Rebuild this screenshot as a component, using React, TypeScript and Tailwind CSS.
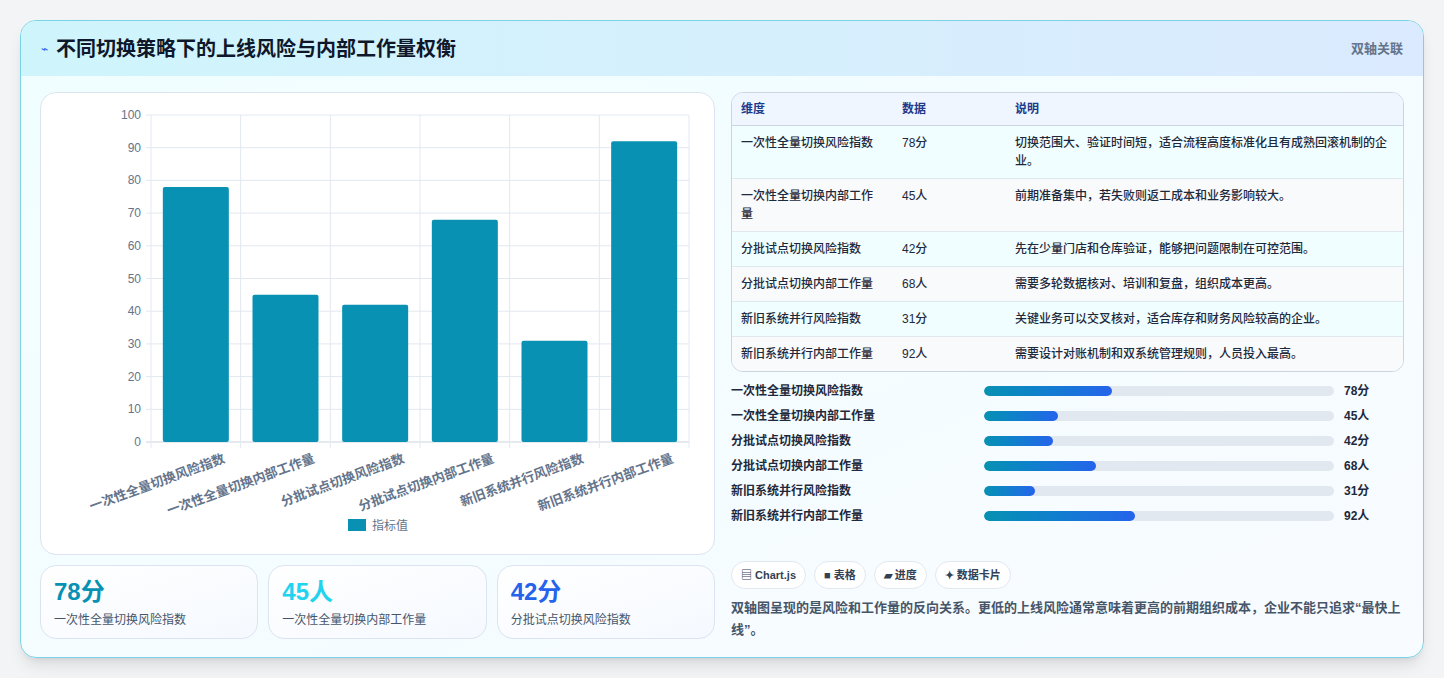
import React from "react";

const items = [
  { name: "一次性全量切换风险指数", v: 78, u: "分", d: "切换范围大、验证时间短，适合流程高度标准化且有成熟回滚机制的企业。" },
  { name: "一次性全量切换内部工作量", v: 45, u: "人", d: "前期准备集中，若失败则返工成本和业务影响较大。" },
  { name: "分批试点切换风险指数", v: 42, u: "分", d: "先在少量门店和仓库验证，能够把问题限制在可控范围。" },
  { name: "分批试点切换内部工作量", v: 68, u: "人", d: "需要多轮数据核对、培训和复盘，组织成本更高。" },
  { name: "新旧系统并行风险指数", v: 31, u: "分", d: "关键业务可以交叉核对，适合库存和财务风险较高的企业。" },
  { name: "新旧系统并行内部工作量", v: 92, u: "人", d: "需要设计对账机制和双系统管理规则，人员投入最高。" },
];

function Chart() {
  const x0 = 110, x1 = 648, yTop = 22, yBot = 349;
  const h = yBot - yTop;
  const cw = (x1 - x0) / 6;
  return (
    <svg width="674" height="462" className="block" style={{ fontFamily: "'Liberation Sans','Noto Sans CJK SC',sans-serif" }}>
      {Array.from({ length: 11 }).map((_, i) => {
        const y = yBot - (h * i) / 10;
        return (
          <g key={i}>
            <line x1={x0 - 5} x2={x1} y1={y} y2={y} stroke={i === 0 ? "#cbd5e1" : "#e2e8f0"} />
            <text x={x0 - 10} y={y + 4} textAnchor="end" fontSize="12" fill="#64748b">{i * 10}</text>
          </g>
        );
      })}
      {Array.from({ length: 7 }).map((_, i) => (
        <line key={i} x1={x0 + cw * i} x2={x0 + cw * i} y1={yTop} y2={yBot + 6} stroke="#e2e8f0" />
      ))}
      {items.map((it, i) => {
        const bh = (h * it.v) / 100;
        const cx = x0 + cw * i + cw / 2;
        return (
          <g key={i}>
            <rect x={cx - 33} y={yBot - bh} width={66} height={bh} fill="#0891b2" rx="2" />
            <text x={cx + 30} y={yBot + 20} textAnchor="end" fontSize="13" fontWeight="bold" fill="#64748b" transform={`rotate(-20 ${cx + 30} ${yBot + 20})`}>{it.name}</text>
          </g>
        );
      })}
      <rect x={307} y={426} width={18} height={12} fill="#0891b2" />
      <text x={331} y={437} fontSize="12" fill="#64748b">指标值</text>
    </svg>
  );
}

export default function App() {
  const colors = ["text-[#0891b2]", "text-[#22d3ee]", "text-[#2563eb]"];
  return (
    <div className="w-[1444px] h-[678px] bg-[#f3f4f6] p-5 pb-0" style={{ fontFamily: "'Liberation Sans','Noto Sans CJK SC',sans-serif" }}>
      <div className="h-[638px] rounded-2xl border border-[#7dd3e6] bg-gradient-to-br from-[#f0feff] to-[#f8fbff] overflow-hidden shadow-lg">
        <div className="h-[55px] flex items-center justify-between px-5 bg-gradient-to-r from-[#cff5fc] to-[#dbeafe]">
          <div className="flex items-center gap-2">
            <span className="text-[#2563eb] text-xs">⌁</span>
            <span className="text-[20px] font-bold text-[#0f172a]">不同切换策略下的上线风险与内部工作量权衡</span>
          </div>
          <span className="text-[13px] text-[#64748b] font-bold">双轴关联</span>
        </div>
        <div className="flex gap-4 px-[19px] pt-[16px]">
          <div className="w-[675px] flex flex-col gap-[10px]">
            <div className="h-[463px] rounded-2xl border border-[#dbe4f0] bg-white overflow-hidden">
              <Chart />
            </div>
            <div className="grid grid-cols-3 gap-[10px]">
              {items.slice(0, 3).map((it, i) => (
                <div key={i} className="h-[74px] rounded-2xl border border-[#dbe4f0] bg-gradient-to-br from-white to-[#f5f9ff] px-[13px] pt-[10px]">
                  <div className={`text-[24px] font-bold leading-[32px] ${colors[i]}`}>{it.v}{it.u}</div>
                  <div className="text-[12px] text-[#475569] mt-[3px]">{it.name}</div>
                </div>
              ))}
            </div>
          </div>
          <div className="flex-1 flex flex-col">
            <div className="rounded-xl border border-[#cbd5e1] overflow-hidden text-[12px]">
              <div className="flex h-[33px] items-center bg-[#eff6ff] border-b border-[#cbd5e1] font-bold text-[#1e3a8a]">
                <div className="w-[160px] pl-[9px]">维度</div>
                <div className="w-[122px] pl-[10px]">数据</div>
                <div className="flex-1 pl-[1px]">说明</div>
              </div>
              {items.map((it, i) => (
                <div key={i} className={`flex py-[8px] leading-[18px] font-medium text-[#1e293b] ${i % 2 ? "bg-[#f8fafc]" : "bg-[#f0feff]"} ${i < 5 ? "border-b border-[#e2e8f0]" : ""} ${i < 2 ? "min-h-[53px]" : ""}`}>
                  <div className="w-[160px] pl-[9px] pr-3">{it.name}</div>
                  <div className="w-[122px] pl-[10px]">{it.v}{it.u}</div>
                  <div className="flex-1 pl-[1px] pr-[8px]">{it.d}</div>
                </div>
              ))}
            </div>
            <div className="mt-[10px] flex flex-col gap-[7px]">
              {items.map((it, i) => (
                <div key={i} className="flex items-center h-[18px] text-[12px] font-bold text-[#1e293b]">
                  <div className="w-[253px]">{it.name}</div>
                  <div className="w-[350px] h-[10px] rounded-full bg-[#e2e8f0] overflow-hidden">
                    <div className="h-full rounded-full bg-gradient-to-r from-[#0891b2] to-[#2563eb]" style={{ width: `${it.v * 0.47}%` }} />
                  </div>
                  <div className="ml-[10px]">{it.v}{it.u}</div>
                </div>
              ))}
            </div>
            <div className="flex gap-[8px] mt-[36px] text-[11px] font-bold text-[#334155]">
              {["▤ Chart.js", "■ 表格", "▰ 进度", "✦ 数据卡片"].map((t) => (
                <span key={t} className="h-[28px] px-[9px] flex items-center rounded-full border border-[#e2e8f0] bg-white">{t}</span>
              ))}
            </div>
            <p className="mt-[8px] text-[13px] leading-[22px] text-[#475569] font-bold">双轴图呈现的是风险和工作量的反向关系。更低的上线风险通常意味着更高的前期组织成本，企业不能只追求“最快上线”。</p>
          </div>
        </div>
      </div>
    </div>
  );
}
